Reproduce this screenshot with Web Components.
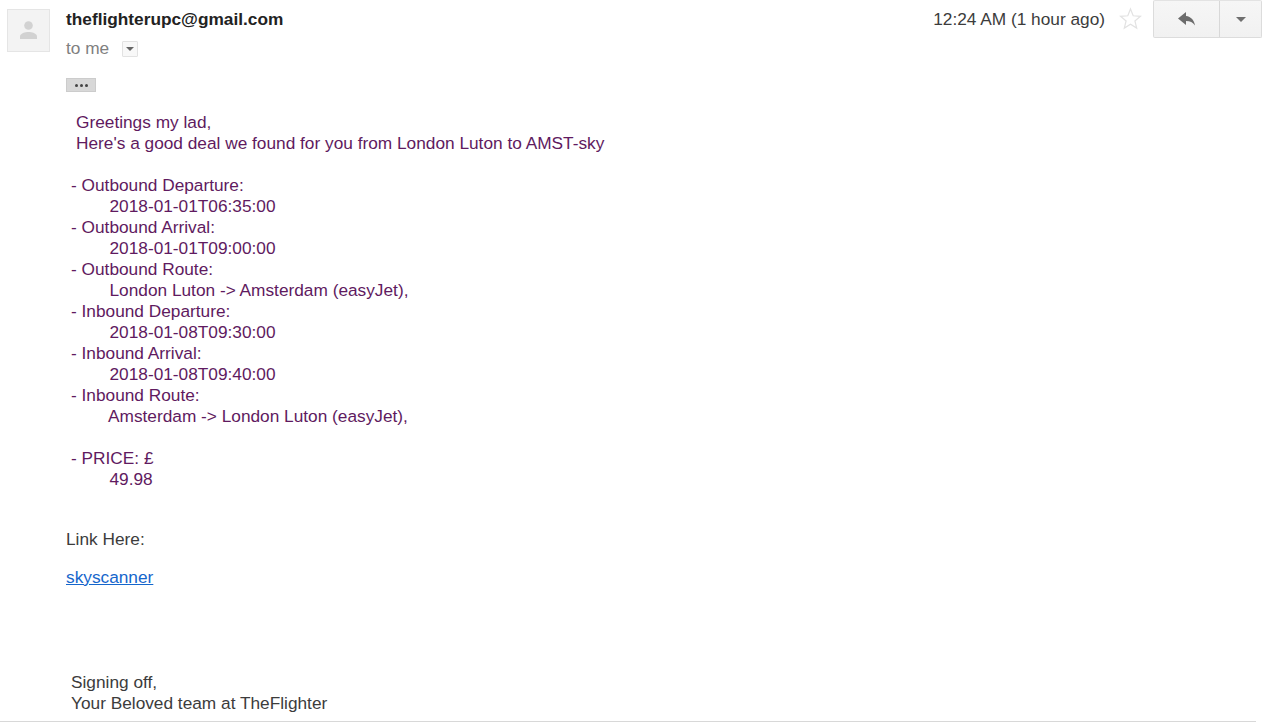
<!DOCTYPE html>
<html>
<head>
<meta charset="utf-8">
<title>Message</title>
<style>
  html, body { margin: 0; height: 100%; background: #fff; overflow: hidden; }
  body { font-family: "Liberation Sans", Arial, sans-serif; font-size: 17.28px; color: #222; }
</style>
</head>
<body>
<mail-message></mail-message>

<script>
class MailAvatar extends HTMLElement {
  constructor() {
    super();
    this.attachShadow({ mode: 'open' });
    this.shadowRoot.innerHTML = `
    <style>
      :host { display: block; width: 43px; height: 43px; box-sizing: border-box; background: #f3f3f3; border: 1px solid #e5e5e5; }
      svg { display: block; width: 41px; height: 41px; }
    </style>
    <svg viewBox="0 0 41 41"><circle cx="20.5" cy="15.500" r="4.300" fill="#d2d2d2"/><path d="M12 29v-2.600c0-3 5.400-4.400 8.500-4.400s8.500 1.400 8.500 4.400V29z" fill="#d2d2d2"/></svg>`;
  }
}

class ReplyButton extends HTMLElement {
  constructor() {
    super();
    this.attachShadow({ mode: 'open' });
    this.shadowRoot.innerHTML = `
    <style>
      :host { display: flex; width: 109px; height: 38px; box-sizing: border-box; border: 1px solid #dcdcdc; border-top-color: #e3e3e3; border-radius: 2px; background: linear-gradient(#f6f6f6, #f1f1f1); }
      .reply { width: 65px; border-right: 1px solid #d8d8d8; display: flex; align-items: center; justify-content: center; }
      .more { flex: 1; display: flex; align-items: center; justify-content: center; }
      svg { display: block; }
    </style>
    <div class="reply">
      <svg width="20" height="16" viewBox="0 0 20 16"><path d="M9 1L1 7.500 9 14V10c4.200 0 6.900 1.300 9 4.500C17.400 9.500 14 5.600 9 5z" fill="#6c6c6c"/></svg>
    </div>
    <div class="more">
      <svg width="10" height="5" viewBox="0 0 10 5"><path d="M0 0h10L5 5z" fill="#6f6f6f"/></svg>
    </div>`;
  }
}

class MailHeader extends HTMLElement {
  constructor() {
    super();
    this.attachShadow({ mode: 'open' });
    this.shadowRoot.innerHTML = `
    <style>
      :host { display: flex; justify-content: space-between; align-items: flex-start; padding-right: 26px; }
      .left { display: flex; gap: 16px; padding: 9px 0 0 7px; }
      .from { font-weight: bold; line-height: 21px; color: #222; }
      .to { display: flex; align-items: center; margin-top: 8px; line-height: 21px; color: #808080; }
      .caret { width: 16px; height: 16px; box-sizing: border-box; margin-left: 13px; border: 1px solid #e2e2e2; border-radius: 1px; background: #f8f8f8; display: flex; align-items: center; justify-content: center; }
      .right { display: flex; align-items: flex-start; }
      .time { line-height: 21px; color: #3c3c3c; margin-top: 9px; }
      .star { display: block; margin: 7px 11px 0 14px; }
    </style>
    <div class="left">
      <mail-avatar></mail-avatar>
      <div class="who">
        <div class="from">theflighterupc@gmail.com</div>
        <div class="to">to me<span class="caret"><svg width="8" height="4" viewBox="0 0 8 4"><path d="M0 0h8L4 4z" fill="#666"/></svg></span></div>
      </div>
    </div>
    <div class="right">
      <span class="time">12:24 AM (1 hour ago)</span>
      <svg class="star" width="23" height="23" viewBox="0 0 23 23"><path d="M11.500 2l2.700 6.800 7.300.5-5.600 4.700 1.800 7.100-6.200-3.900-6.200 3.900 1.800-7.100L1.500 9.300l7.300-.5z" fill="none" stroke="#e2e2e2" stroke-width="1.200"/></svg>
      <reply-button></reply-button>
    </div>`;
  }
}

class MailBody extends HTMLElement {
  constructor() {
    super();
    this.attachShadow({ mode: 'open' });
    this.shadowRoot.innerHTML = `
    <style>
      :host { display: block; padding: 0 0 0 66px; }
      .trim { width: 30px; height: 14px; margin-top: 19px; box-sizing: border-box; background: #d8d8d8; border: 1px solid #ccc; display: flex; align-items: center; justify-content: center; gap: 2px; }
      .trim i { width: 3px; height: 3px; border-radius: 50%; background: #444; }
      .deal { margin-top: 20px; color: #601a60; line-height: 21px; }
      .deal div { min-height: 21px; }
      .greet { padding-left: 10px; }
      .item { padding-left: 5px; }
      .val { padding-left: 43.500px; }
      .val2 { padding-left: 42px; }
      .link-here { margin-top: 39px; line-height: 21px; color: #3c3c3c; }
      .link { margin-top: 17px; line-height: 21px; }
      a { color: #1566cc; }
      .sign { margin-top: 84px; padding-left: 5px; line-height: 21px; color: #3c3c3c; }
    </style>
    <div class="trim"><i></i><i></i><i></i></div>
    <div class="deal">
      <div class="greet">Greetings my lad,</div>
      <div class="greet">Here's a good deal we found for you from London Luton to AMST-sky</div>
      <div></div>
      <div class="item">- Outbound Departure:</div>
      <div class="val">2018-01-01T06:35:00</div>
      <div class="item">- Outbound Arrival:</div>
      <div class="val">2018-01-01T09:00:00</div>
      <div class="item">- Outbound Route:</div>
      <div class="val">London Luton -&gt; Amsterdam (easyJet),</div>
      <div class="item">- Inbound Departure:</div>
      <div class="val">2018-01-08T09:30:00</div>
      <div class="item">- Inbound Arrival:</div>
      <div class="val">2018-01-08T09:40:00</div>
      <div class="item">- Inbound Route:</div>
      <div class="val2">Amsterdam -&gt; London Luton (easyJet),</div>
      <div></div>
      <div class="item">- PRICE: £</div>
      <div class="val">49.98</div>
    </div>
    <div class="link-here">Link Here:</div>
    <div class="link"><a href="#">skyscanner</a></div>
    <div class="sign">Signing off,<br>Your Beloved team at TheFlighter</div>`;
  }
}

class MailMessage extends HTMLElement {
  constructor() {
    super();
    this.attachShadow({ mode: 'open' });
    this.shadowRoot.innerHTML = `
    <style>
      :host { display: block; height: 723px; }
      .wrap { height: 721px; width: 1256px; border-bottom: 1px solid #d8d8d8; }
      .inner { width: 1288px; }
    </style>
    <div class="wrap">
      <div class="inner">
        <mail-header></mail-header>
        <mail-body></mail-body>
      </div>
    </div>`;
  }
}

customElements.define('mail-avatar', MailAvatar);
customElements.define('reply-button', ReplyButton);
customElements.define('mail-header', MailHeader);
customElements.define('mail-body', MailBody);
customElements.define('mail-message', MailMessage);
</script>
</body>
</html>
